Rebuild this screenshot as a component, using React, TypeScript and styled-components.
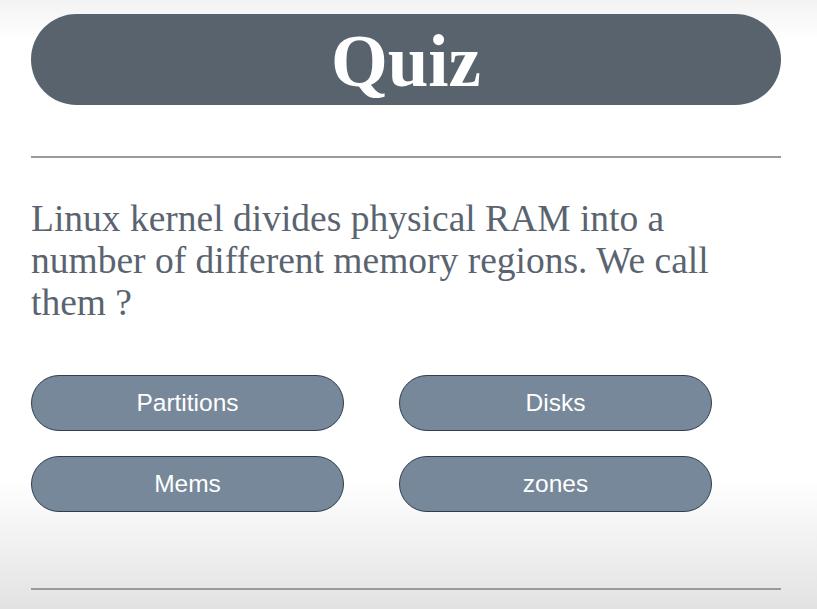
import React from "react";
import styled, { createGlobalStyle } from "styled-components";

const Global = createGlobalStyle`
  html, body { margin: 0; padding: 0; }
  body {
    min-height: 609px;
    background: linear-gradient(to bottom, #f3f3f3 0px, #ffffff 40px, #ffffff 480px, #e2e2e2 609px);
  }
`;

const Page = styled.div`
  width: 750px;
  margin: 0 0 0 31px;
  padding-top: 14px;
  display: flex;
  flex-direction: column;
`;

const Header = styled.div`
  height: 91px;
  border-radius: 46px;
  background: #58636d;
  display: flex;
  align-items: center;
  justify-content: center;
`;

const Title = styled.h1`
  margin: 0;
  font-family: "Liberation Serif", "Times New Roman", serif;
  font-weight: bold;
  font-size: 73px;
  color: #ffffff;
  line-height: 1;
  padding-top: 4px;
`;

const Rule = styled.hr<{ $top: number }>`
  margin: ${(p) => p.$top}px 0 0 0;
  border: none;
  border-top: 2px solid #9a9a9a;
  height: 0;
`;

const Question = styled.p`
  margin: 40px 0 0 0;
  width: 700px;
  font-family: "Liberation Serif", "Times New Roman", serif;
  font-size: 37.5px;
  line-height: 42px;
  color: #5a6470;
`;

const Answers = styled.div`
  margin-top: 51px;
  display: grid;
  grid-template-columns: 313px 313px;
  column-gap: 55px;
  row-gap: 25px;
`;

const Answer = styled.button`
  height: 56px;
  border-radius: 28px;
  border: 1px solid #2f3e50;
  background: #77889a;
  color: #ffffff;
  font-family: "Liberation Sans", Arial, sans-serif;
  font-size: 24.5px;
  cursor: pointer;
  padding: 0 0 1px 0;
`;

const answers = ["Partitions", "Disks", "Mems", "zones"];

export default function App() {
  return (
    <>
      <Global />
      <Page>
        <Header>
          <Title>Quiz</Title>
        </Header>
        <Rule $top={51} />
        <Question>
          Linux kernel divides physical RAM into a number of different memory regions. We call them ?
        </Question>
        <Answers>
          {answers.map((a) => (
            <Answer key={a}>{a}</Answer>
          ))}
        </Answers>
        <Rule $top={76} />
      </Page>
    </>
  );
}
